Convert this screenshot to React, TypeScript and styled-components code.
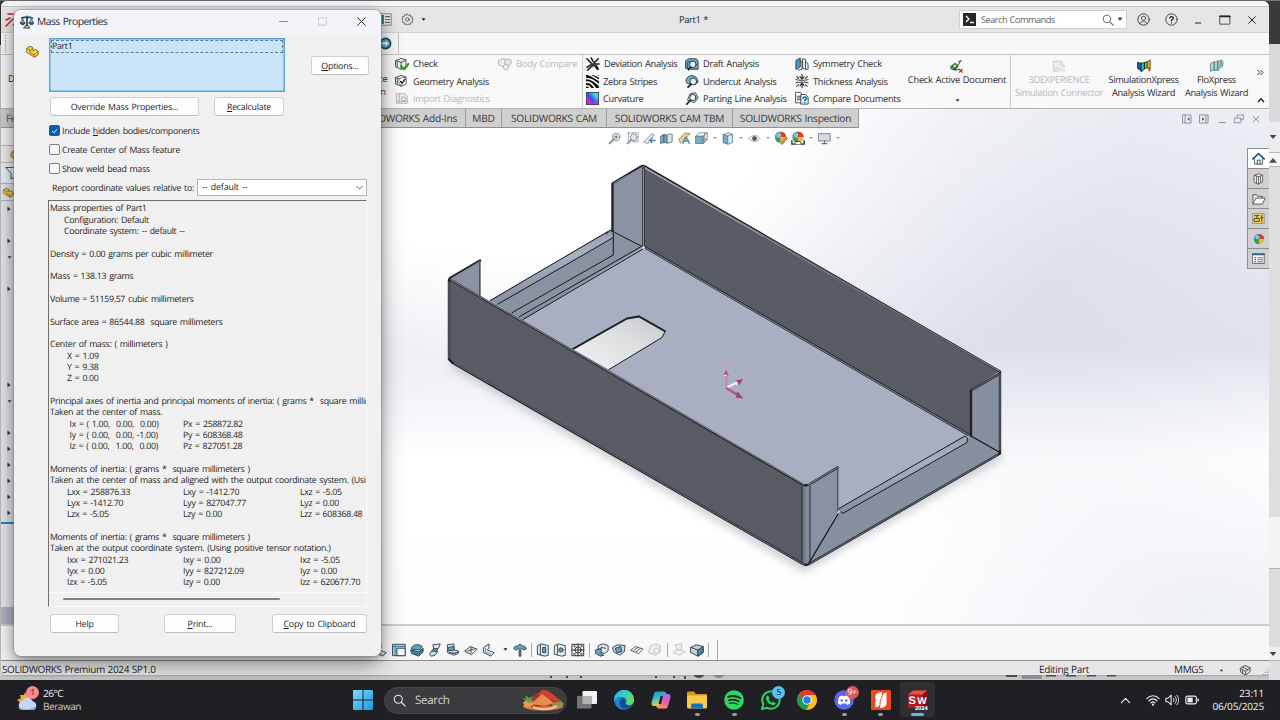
import React from 'react';
import styled, { createGlobalStyle } from 'styled-components';

const GlobalStyle = createGlobalStyle`
  * { box-sizing: border-box; }
  body {
    margin: 0;
    overflow: hidden;
    background: #1f1f23;
    color: #262626;
    font-family: "Open Sans", "Noto Sans", sans-serif;
    text-rendering: geometricPrecision;
  }
  svg { display: block; flex: none; }
`;

/* ---------- desktop ---------- */

const Desktop = styled.div`
  position: relative;
  width: 1280px;
  height: 720px;
  display: grid;
  grid-template-rows: 680px 40px;
  overflow: hidden;
`;

const Screen = styled.div`
  display: grid;
  grid-template-columns: 1269px 11px;
  background: linear-gradient(#3a3a3c 44px, #d8d8d8 44px, #d8d8d8 674px, #c3c6c4 674px);
  border-top: 1px solid #77777a;
  min-height: 0;
`;

const AppColumn = styled.div`
  display: flex;
  flex-direction: column;
  min-width: 0;
`;

const AppWindow = styled.div`
  display: grid;
  grid-template-columns: minmax(0, 1fr);
  grid-template-rows: 5px 27px 21px 55px 517px 35px 14px;
  height: 674px;
  margin-left: 1px;
  background: #f7f7f7;
  border-radius: 6px 6px 2px 6px;
  overflow: hidden;
  box-shadow: 0 0 2px rgba(0, 0, 0, 0.5);
`;

const Behind = styled.div`
  flex: 1;
  overflow: hidden;
`;

const BackStrip = styled.div`
  display: flex;
  flex-direction: column;
`;

const StripPart = styled.div<{ $h: number; $bg: string; $line?: boolean }>`
  height: ${(p) => p.$h}px;
  background: ${(p) => p.$bg};
  display: flex;
  align-items: center;
  justify-content: center;
  padding-right: 3px;
  border-bottom: ${(p) => (p.$line ? '1px solid #b5b5b5' : 'none')};
`;

/* ---------- title bar ---------- */

const TopEdge = styled.div`
  background: #f6f6f6;
`;

const TitleBar = styled.div`
  display: flex;
  align-items: center;
  background: #e5e5e5;
  border-top: 1px solid #c8c8c8;
  border-bottom: 1px solid #d4d4d4;
  padding-left: 4px;
`;

const TitleStart = styled.div`
  width: 387px;
  display: flex;
  justify-content: space-between;
  align-items: center;
`;

const TitleGear = styled.div`
  width: 60px;
  display: flex;
  align-items: center;
  gap: 7px;
  padding-left: 9px;
`;

const DocTitle = styled.div`
  flex: 1;
  text-align: center;
  padding-right: 24px;
  font-size: 9.4px;
  letter-spacing: -0.35px;
  word-spacing: 0.6px;
`;

const SearchBox = styled.div`
  width: 168px;
  height: 19px;
  display: flex;
  align-items: center;
  background: #fff;
  border: 1px solid #cfcfcf;
  padding: 0 3px 0 3px;
  font-size: 9.2px;
  letter-spacing: -0.5px;
  word-spacing: 0.6px;
  color: #666;
`;

const SearchLabel = styled.span`
  flex: 1;
  padding-left: 5px;
`;

const TitleButtons = styled.div`
  width: 142px;
  display: grid;
  grid-template-columns: 32px 24px 30px 24px 30px;
  justify-items: center;
  align-items: center;
`;

/* ---------- menu row and ribbon ---------- */

const MenuRow = styled.div`
  display: flex;
  background: #f7f7f7;
  padding-left: 3px;
`;

const MenuTab = styled.div`
  width: 395px;
  display: flex;
  align-items: center;
  justify-content: space-between;
  border-right: 1px solid #c2c2c2;
  padding-right: 6px;
`;

const Ribbon = styled.div`
  display: grid;
  grid-template-columns: 388px 103px 91px 99px 110px 108px 111px 95px 74px 72px 17px;
  background: #f8f8f8;
  border-top: 1px solid #c4c4c4;
  border-bottom: 1px solid #b4b4b4;
  font-size: 9.3px;
  letter-spacing: -0.32px;
  word-spacing: 0.7px;
  line-height: 13px;
  color: #2c2c2c;
`;

const RibbonEdge = styled.div`
  display: flex;
  justify-content: space-between;
  padding: 17px 0 0 7px;
`;

const RibbonTail = styled.div<{ $end?: boolean }>`
  text-align: ${(p) => (p.$end ? 'center' : 'left')};
  width: 12px;
`;

const RibbonColumn = styled.div<{ $line?: boolean; $pad?: number }>`
  display: grid;
  grid-template-rows: repeat(3, 17.4px);
  padding-left: ${(p) => p.$pad ?? 3}px;
  border-right: ${(p) => (p.$line ? '1px solid #cccccc' : 'none')};
`;

const RibbonItem = styled.div<{ $off?: boolean }>`
  display: flex;
  align-items: center;
  gap: 4px;
  white-space: nowrap;
  color: ${(p) => (p.$off ? '#b9b9b9' : 'inherit')};
  & svg {
    opacity: ${(p) => (p.$off ? 0.4 : 1)};
    filter: ${(p) => (p.$off ? 'grayscale(1)' : 'none')};
  }
`;

const BigItem = styled.div<{ $off?: boolean; $line?: boolean }>`
  display: flex;
  flex-direction: column;
  align-items: center;
  text-align: center;
  padding: 4px 0 0 1px;
  white-space: nowrap;
  color: ${(p) => (p.$off ? '#b9b9b9' : 'inherit')};
  border-right: ${(p) => (p.$line ? '1px solid #cccccc' : 'none')};
  & svg:first-child {
    opacity: ${(p) => (p.$off ? 0.5 : 1)};
  }
`;

const WideLabel = styled.span`
  padding-left: 3px;
  letter-spacing: -0.25px;
`;

const BigArrow = styled.div`
  padding: 12px 0 0 3px;
`;

const RibbonEnd = styled.div`
  display: flex;
  flex-direction: column;
  align-items: center;
  justify-content: space-between;
  padding: 14px 0 5px;
`;

/* ---------- workspace ---------- */

const Workspace = styled.div`
  display: grid;
  grid-template-columns: 13px 1fr;
  min-height: 0;
  border-bottom: 2px solid #cdcdcf;
`;

const TreePanel = styled.div`
  display: grid;
  grid-template-columns: minmax(0, 1fr);
  grid-template-rows: 19px 18px 17px 21px 17px 323px 1fr 16px;
  background: #e3e5e9;
  overflow: hidden;
`;

const TreeCell = styled.div<{ $bg?: string }>`
  background: ${(p) => p.$bg ?? 'transparent'};
  border-bottom: 1px solid #b5b5b8;
  display: flex;
  align-items: center;
  justify-content: flex-end;
  overflow: hidden;
`;

const TreeRows = styled.div`
  display: grid;
  grid-auto-rows: 16px;
  justify-items: center;
  align-items: center;
  align-content: start;
  padding-left: 3px;
  border-bottom: 2px solid #2f81b7;
`;

const LeftTab = styled.div`
  background: #cdcdcd;
  font-size: 10.2px;
  line-height: 18px;
  letter-spacing: -0.6px;
  padding-left: 5px;
  color: #555;
  border-bottom: 1px solid #999;
`;

const Viewport = styled.div`
  position: relative;
  display: flex;
  flex-direction: column;
  overflow: hidden;
  background:
    radial-gradient(ellipse 320px 170px at 1190px 500px, rgba(234, 237, 245, 0.8), rgba(240, 242, 248, 0) 100%),
    radial-gradient(ellipse 300px 290px at 1040px 180px, rgba(207, 210, 226, 0.34), rgba(207, 211, 227, 0) 100%),
    radial-gradient(ellipse 620px 310px at 500px 20px, rgba(255, 255, 255, 1) 40%, rgba(255, 255, 255, 0) 100%),
    linear-gradient(#eceff4 0, #e6e9f0 120px, #e1e4ed 240px, #f3f5f9 300px, #ffffff 350px, #ffffff 420px, #fdfdfe 516px);
`;

const Scene = styled.svg`
  position: absolute;
  inset: 0;
`;

const TabRow = styled.div`
  position: relative;
  height: 19px;
  display: flex;
  justify-content: space-between;
`;

const Tabs = styled.div`
  display: flex;
`;

const Tab = styled.div<{ $w: number; $first?: boolean }>`
  width: ${(p) => p.$w}px;
  background: #cfcfcf;
  border-right: 1px solid #9b9b9b;
  border-bottom: 1px solid #8f8f8f;
  font-size: 10.2px;
  letter-spacing: -0.27px;
  word-spacing: 0.5px;
  line-height: 18px;
  color: #3a3a3a;
  white-space: nowrap;
  text-align: ${(p) => (p.$first ? 'right' : 'center')};
  padding-right: ${(p) => (p.$first ? 8 : 0)}px;
`;

const DocButtons = styled.div`
  display: grid;
  grid-template-columns: repeat(5, 17.4px);
  align-items: center;
  justify-items: center;
  padding: 1px 4px 0 0;
`;

const HeadsUp = styled.div`
  position: relative;
  display: grid;
  grid-template-columns: repeat(5, 17.4px) 17.4px 9px 17.4px 9px 17.4px 9px 17.4px 17.4px 9px 17.4px 9px;
  align-items: center;
  justify-items: center;
  padding-left: 592px;
  height: 20px;
`;

const TaskPane = styled.div`
  position: absolute;
  right: 0;
  top: 39px;
  width: 22px;
  display: grid;
  grid-auto-rows: 20px;
  border: 1px solid #8e8e8e;
  border-right: none;
  border-bottom: none;
`;

const PaneButton = styled.div<{ $active?: boolean }>`
  display: grid;
  place-items: center;
  background: ${(p) => (p.$active ? '#ffffff' : '#d0d0d0')};
  border-bottom: 1px solid #8e8e8e;
`;

/* ---------- bottom rows ---------- */

const SheetBar = styled.div`
  display: flex;
  align-items: center;
  padding: 13px 0 0 371px;
  background: #f7f7f7;
  border-bottom: 1px solid #8c8c8c;
`;

const SheetCell = styled.div<{ $w: number; $off?: boolean }>`
  width: ${(p) => p.$w}px;
  display: grid;
  place-items: center;
  opacity: ${(p) => (p.$off ? 0.35 : 1)};
  filter: ${(p) => (p.$off ? 'grayscale(1)' : 'none')};
`;

const SheetLine = styled.div<{ $h: number }>`
  width: 1px;
  height: ${(p) => p.$h}px;
  background: #a9a9a9;
`;

const StatusBar = styled.div`
  display: grid;
  grid-template-columns: 1037px 135px 45px 16px 1fr;
  background: #e6e6e6;
  font-size: 10px;
  letter-spacing: -0.36px;
  word-spacing: 0.5px;
  line-height: 15px;
  padding: 1px 0 0 1px;
  white-space: nowrap;
  align-items: center;
`;

/* ---------- dialog ---------- */

const Dialog = styled.div`
  position: absolute;
  left: 14px;
  top: 10px;
  width: 367px;
  height: 646px;
  display: flex;
  flex-direction: column;
  background: #f0f0f0;
  border-radius: 7px;
  box-shadow: 0 0 0 1px rgba(120, 120, 120, 0.35), 0 8px 22px rgba(0, 0, 0, 0.42), 0 2px 8px rgba(0, 0, 0, 0.2);
  overflow: hidden;
  font-size: 8.8px;
  letter-spacing: -0.31px;
  word-spacing: 1px;
  color: #1d1d1d;
`;

const DialogTitle = styled.div`
  height: 24px;
  flex: none;
  display: flex;
  align-items: center;
  background: #f2f4fa;
  padding: 0 0 1px 6px;
  font-size: 10.3px;
  letter-spacing: -0.55px;
`;

const DialogName = styled.div`
  flex: 1;
  padding-left: 3px;
`;

const DialogButtons = styled.div`
  display: grid;
  grid-template-columns: repeat(3, 39px);
  justify-items: center;
  align-items: center;
`;

const SelectArea = styled.div`
  display: grid;
  grid-template-columns: 35px 236px 1fr;
  height: 54px;
  margin-top: 4px;
  flex: none;
`;

const PartMark = styled.div`
  padding: 7px 0 0 12px;
`;

const ListBox = styled.div`
  background: #cce4f7;
  border: 1px solid #56a5dc;
  box-shadow: inset 0 0 0 0.5px #56a5dc;
  padding: 1px;
`;

const ListItem = styled.div`
  border: 1px dashed #5d7e96;
  height: 13px;
  line-height: 10px;
`;

const PushButton = styled.div<{ $w: number }>`
  width: ${(p) => p.$w}px;
  height: 19px;
  background: #fdfdfd;
  border: 1px solid #d0d0d0;
  border-bottom-color: #bdbdbd;
  border-radius: 3px;
  text-align: center;
  line-height: 18px;
  letter-spacing: -0.21px;
  white-space: nowrap;
`;

const OptionsSlot = styled.div`
  padding: 18px 0 0 26px;
`;

const ButtonRow = styled.div`
  display: flex;
  gap: 15px;
  margin: 5px 14px 0 36px;
`;

const FooterRow = styled.div`
  display: grid;
  grid-template-columns: 114px 108px 1fr;
  margin: 7px 14px 0 36px;
`;

const CheckLines = styled.div`
  display: grid;
  grid-auto-rows: 19px;
  margin: 5px 0 0 35px;
  align-items: center;
`;

const CheckLine = styled.div`
  display: flex;
  align-items: center;
  gap: 2px;
`;

const CheckBox = styled.div<{ $on?: boolean }>`
  width: 11px;
  height: 11px;
  border-radius: 2px;
  border: 1px solid ${(p) => (p.$on ? '#0a5fb4' : '#7d7d7d')};
  background: ${(p) => (p.$on ? '#0a5fb4' : '#f9f9f9')};
  display: grid;
  place-items: center;
`;

const CoordinateRow = styled.div`
  display: flex;
  align-items: center;
  justify-content: space-between;
  height: 17px;
  margin: 1px 14px 0 38px;
  letter-spacing: -0.28px;
  white-space: nowrap;
`;

const SelectBox = styled.div`
  width: 170px;
  height: 17px;
  border: 1px solid #b5b5b5;
  background: #fff;
  display: flex;
  align-items: center;
  justify-content: space-between;
  padding: 0 3px 1px 4px;
  letter-spacing: -0.1px;
`;

const Report = styled.div`
  height: 407px;
  margin: 4px 14px 0 34px;
  border-left: 1px solid #6f6f6f;
  border-top: 1.5px solid #6f6f6f;
  border-right: 1px solid #fbfbfb;
  border-bottom: 1px solid #fbfbfb;
  display: grid;
  grid-template-columns: minmax(0, 1fr);
  grid-template-rows: 391px 14px;
  overflow: hidden;
`;

const ReportText = styled.div`
  padding: 2.4px 0 0 1px;
  display: grid;
  grid-auto-rows: 11.34px;
  align-content: start;
  line-height: 11.34px;
  white-space: pre;
  overflow: hidden;
`;

const ReportLine = styled.div<{ $indent: number }>`
  padding-left: ${(p) => p.$indent}px;
  height: 11.34px;
`;

const ReportColumns = styled.div<{ $indent: number }>`
  display: grid;
  grid-template-columns: ${(p) => 133 - p.$indent}px 117px 1fr;
  padding-left: ${(p) => p.$indent}px;
`;

const ReportScroll = styled.div`
  border-top: 1px solid #fafafa;
  padding: 5px 0 0 14px;
`;

const ScrollThumb = styled.div`
  width: 217px;
  height: 2px;
  border-radius: 1px;
  background: #828282;
`;

/* ---------- taskbar ---------- */

const Taskbar = styled.div`
  display: grid;
  grid-template-columns: 353px 31px 183px 2px 367px 1fr;
  align-items: center;
  background: #202024;
  color: #f2f2f2;
`;

const Weather = styled.div`
  display: flex;
  align-items: center;
  gap: 3px;
  padding-left: 16px;
  font-size: 10px;
  letter-spacing: -0.45px;
  line-height: 13.5px;
`;

const Muted = styled.div`
  color: #c6c6c8;
`;

const SearchPill = styled.div`
  height: 27px;
  border-radius: 14px;
  background: #3c3c40;
  border: 1px solid #47474b;
  display: grid;
  grid-template-columns: 22px 106px 1fr;
  align-items: center;
  padding-left: 8px;
  font-size: 11.6px;
  letter-spacing: -0.35px;
  color: #d2d2d4;
`;

const AppIcons = styled.div`
  grid-column: 5;
  display: grid;
  grid-template-columns: repeat(10, 36.7px);
  height: 40px;
`;

const TaskSlot = styled.div<{ $active?: boolean }>`
  position: relative;
  display: grid;
  grid-template-rows: 24px 3px;
  justify-items: center;
  align-content: end;
  align-items: center;
  gap: 1px;
  margin: 2px 1px 3px;
  padding-bottom: 1px;
  border-radius: 4px;
  background: ${(p) => (p.$active ? '#2f2f34' : 'transparent')};
`;

const Running = styled.div<{ $kind: 'none' | 'dot' | 'active' }>`
  width: ${(p) => (p.$kind === 'active' ? 13 : 5)}px;
  height: ${(p) => (p.$kind === 'none' ? 0 : 2.5)}px;
  border-radius: 2px;
  background: ${(p) => (p.$kind === 'active' ? '#5cb8e8' : '#9b9b9e')};
`;

const Badge = styled.div<{ $bg: string; $fg: string; $top?: number; $right?: number }>`
  position: absolute;
  top: ${(p) => p.$top ?? 4}px;
  right: ${(p) => p.$right ?? 3}px;
  min-width: 13px;
  height: 13px;
  border-radius: 7px;
  background: ${(p) => p.$bg};
  color: ${(p) => p.$fg};
  font-size: 8.5px;
  line-height: 13px;
  letter-spacing: -0.4px;
  text-align: center;
`;

const Tray = styled.div`
  display: grid;
  grid-template-columns: 36px 19px 20px 19px 1fr;
  justify-items: center;
  align-items: center;
  padding: 0 16px 0 171px;
`;

const Clock = styled.div`
  justify-self: end;
  text-align: right;
  font-size: 10px;
  line-height: 13px;
  letter-spacing: -0.15px;
`;

const WeatherArt = styled.div`
  position: relative;
`;

/* ---------- drawings ---------- */

type IconProps = { s?: number; children: React.ReactNode; vb?: string; w?: number };
const Icon = ({ s = 14, w, vb = '0 0 16 16', children }: IconProps) => (
  <svg width={w ?? s} height={s} viewBox={vb} fill="none" stroke="#3d4246" strokeWidth="1" strokeLinecap="round" strokeLinejoin="round">
    {children}
  </svg>
);

const Down = ({ c = '#444', s = 5 }: { c?: string; s?: number }) => (
  <svg width={s} height={s} viewBox="0 0 6 6"><path d="M0.5 1.5h5L3 4.5z" fill={c} /></svg>
);
const Up = ({ s = 8 }: { s?: number }) => (
  <svg width={s} height={s} viewBox="0 0 6 6"><path d="M0 5h6L3 1.5z" fill="#4a4a4a" /></svg>
);
const Right = () => (
  <svg width="4" height="6" viewBox="0 0 4 6"><path d="M0.5 0.5v5L3.5 3z" fill="#3b3b3b" /></svg>
);

const cube = <><path d="M1 4 7 1.500 12.500 3.500v8L7 14 1 11.500z" fill="#eceef0" /><path d="M1 4 7 6.200 12.500 3.500M7 6.200V14M2.500 5.500v6" /></>;

const CheckIcon = () => <Icon>{cube}<path d="M7 10.500 10.500 14 15.300 8" stroke="#2f9a1e" strokeWidth="2.600" /></Icon>;
const GeometryIcon = () => <Icon>{cube}<circle cx="8.500" cy="8.500" r="4.400" fill="#fff" stroke="#777" /><path d="M6.500 8.500 8.200 10.500 11 6.500" stroke="#222" strokeWidth="1.700" /></Icon>;
const ImportIcon = () => <Icon><path d="M2 3h9l3 3v8H2z" fill="#ddd" /><path d="M5 3v8M2 12h12M8 7h4v4H8z" /></Icon>;
const CompareBodyIcon = () => <Icon><path d="M1 4l4-2 5 1v6l-4 2-5-2z" fill="#ddd" /><path d="M8 4l3-2 4 2v4l-3 2-4-2z" fill="#ccc" /><circle cx="9" cy="11.500" r="3" fill="#eee" /></Icon>;
const DeviationIcon = () => <Icon><path d="M1 2l5 5M14 2 9 7M6 1l2 4M1 12c5-5 9-4 14-4M2 15l4-4M10 10l3 4M14 14l-2-4" stroke="#1c1c1c" strokeWidth="1.700" /><path d="M5 9l3-2 3 1-3 3z" fill="#333" /></Icon>;
const ZebraIcon = () => (
  <svg width="13" height="13" viewBox="0 0 16 16"><rect width="16" height="16" fill="#111" />
    <g stroke="#fff" strokeWidth="1.900" fill="none"><path d="M-1 4.500c6-1 11 2 18 9" /><path d="M2-1c6 2 9 5 15 8" /><path d="M-1 9c6-1 8 1 13 8" /><path d="M9-1c3 1 5 2 8 4" /><path d="M-1 13.500c3-1 5 0 7 3" /></g>
  </svg>
);
const CurvatureIcon = () => (
  <svg width="13" height="13" viewBox="0 0 16 16">
    <defs><linearGradient id="rainbow" x1="0" y1="0.900" x2="1" y2="0.100"><stop offset="0" stopColor="#e2243a" /><stop offset="0.220" stopColor="#d42bd8" /><stop offset="0.400" stopColor="#5a35f0" /><stop offset="0.580" stopColor="#2b8cf0" /><stop offset="0.760" stopColor="#27e0dc" /><stop offset="1" stopColor="#5fe08a" /></linearGradient></defs>
    <rect x="0.500" y="0.500" width="15" height="15" fill="url(#rainbow)" stroke="#334" /><path d="M15 15V9c-3 1-6 3-7 6z" fill="#d92bc0" opacity="0.600" />
  </svg>
);
const DraftIcon = () => <Icon><path d="M1 4l3-2h9l2 3v9H8L1 13z" fill="#6fa9c6" stroke="#1f3a4a" /><path d="M3 13V6l3-1" stroke="#1f3a4a" /><circle cx="9" cy="8.500" r="3.800" fill="#e8f3f8" stroke="#222" /><path d="M6.500 11.500 4 14.500" strokeWidth="2" stroke="#222" /></Icon>;
const UndercutIcon = () => <Icon><path d="M1 8c0-6 8-8 12-4l2 5-3 3-9-1z" fill="#79b0cb" stroke="#1f3a4a" /><circle cx="9.500" cy="8.500" r="3.800" fill="#e8f3f8" stroke="#222" /><path d="M7 11.500 3.500 15" strokeWidth="2" stroke="#222" /></Icon>;
const PartingIcon = () => <Icon><path d="M3 10 6 3l6-1 3 6-4 5z" fill="#cfe0ea" stroke="#29424f" /><circle cx="9" cy="7.500" r="3.600" fill="#eef5f9" stroke="#222" /><path d="M6.500 10.500 2 15" strokeWidth="2" stroke="#333" /></Icon>;
const SymmetryIcon = () => <Icon><path d="M1 14V4l5-3v10z" fill="#4f97bd" stroke="#1e3b4b" /><path d="M6 5h2v9l-4 1" /><path d="M9 2l3 1v11l-3-1zM12 5c4 1 3 7 3 9h-3" fill="#dde9f0" /></Icon>;
const ThicknessIcon = () => <Icon><path d="M1 6.500c4 1 10 1 14 0M1 10c4-1 10-1 14 0" stroke="#222" /><path d="M8 0v5M5.500 3 8 6l2.500-3M8 16v-5M5.500 13.500 8 10.500l2.500 3M2 3l2 2M14 3l-2 2M2 14l2-2M14 14l-2-2" stroke="#222" strokeWidth="1.200" /></Icon>;
const CompareDocIcon = () => <Icon><path d="M1 1.500h5l2 2v10H1z" fill="#fafafa" /><path d="M2.500 6h4M2.500 8h4M2.500 10h4" /><path d="M7 4h5l3 3v8H7z" fill="#e4f2f8" /><path d="M9.300 8.500c0-2.200 3.800-2.200 3.800 0 0 1.300-1.900 1.300-1.900 2.700M11.200 13.300v.2" stroke="#0d6ea3" strokeWidth="1.700" /></Icon>;
const ActiveDocIcon = () => <Icon s={14}><path d="M2 9l5-4 3 3-3 4z" fill="#cde8c4" stroke="#2c8424" strokeWidth="1.500" /><path d="M4 8l3 3 6-8M14 2l-3 1M2 11c3 2 6 2 9 1" stroke="#1d1d1d" /><path d="M12 12l3 3M15 12l-3 3" stroke="#d42020" strokeWidth="1.500" /></Icon>;
const ThreeDxIcon = () => <Icon s={14}><path d="M2 3l5-1 5 1v3l3 2-2 2 1 4H2z" fill="#c9c9c9" stroke="#a5a5a5" /><path d="M4 5h4v3H4zM9 9a3 3 0 1 1-2 4" stroke="#eee" strokeWidth="1.500" /></Icon>;
const SimIcon = () => <Icon s={14}><path d="M1 4l5 1v9l-5-3z" fill="#2456b8" stroke="#123" /><path d="M5 5l4-1v7l-4 3z" fill="#26b7c9" stroke="#133" /><path d="M9 4l3-1v7l-3 1z" fill="#6cc935" stroke="#133" /><path d="M12 3l3-2v11l-3-2z" fill="#f0c21a" stroke="#531" /><path d="M13 9h2v5h-2z" fill="#e04220" stroke="none" /></Icon>;
const FloIcon = () => <Icon s={14}><path d="M1 5l4-2v9l-4 2zM5 4l4-2v9l-4 2z" fill="#b5d8d0" stroke="#5e8480" /><path d="M9 3l4-2v8l-4 3z" fill="#a5b8a4" stroke="#6a7a6a" /><path d="M2 13h8M13 2c3 1 2 3 1 6" stroke="#4ab3c9" strokeWidth="1.500" /></Icon>;

const GearIcon = () => <Icon s={13}><circle cx="8" cy="8" r="2.200" stroke="#444" /><path d="M8 1.200l1.300 1.900 2.200-.8.5 2.300 2.300.5-.8 2.200L15 8l-1.500 1.200.8 2.200-2.300.5-.5 2.300-2.200-.8L8 15l-1.300-1.600-2.200.8-.5-2.300-2.300-.5.8-2.200L1 8l1.500-1.200-.8-2.200 2.300-.5.5-2.300 2.200.8z" stroke="#555" /></Icon>;
const ListIcon = () => <Icon s={13}><rect x="1" y="1" width="14" height="14" fill="#e9edf0" stroke="#6e7478" /><path d="M3 2.500h3v11H3z" fill="#336b82" stroke="none" /><path d="M8 4.500h5M8 8h5M8 11.500h5" stroke="#5e666b" strokeWidth="1.400" /></Icon>;
const CompassIcon = () => <Icon s={13}><circle cx="8" cy="8" r="6.300" fill="#5fa3c0" stroke="#154a68" strokeWidth="2" /><path d="M4 7h4V4.500L12 8l-4 3.500V9H4z" fill="#fff" stroke="none" /></Icon>;

const Magnifier = ({ c = '#666', s = 12 }: { c?: string; s?: number }) => <Icon s={s}><circle cx="6.500" cy="6.500" r="5" stroke={c} strokeWidth="1.300" /><path d="M10.200 10.200 15 15" stroke={c} strokeWidth="1.500" /></Icon>;

const ZoomFit = () => <Icon s={13}><circle cx="10" cy="6" r="4.500" fill="#e6edf1" stroke="#6a747a" /><path d="M7 9 2 14" stroke="#8196a3" strokeWidth="2.600" /><path d="M8 6h4M10 4v4" stroke="#59636a" /></Icon>;
const ZoomArea = () => <Icon s={13}><path d="M3 1h12v11H3z" strokeDasharray="2 2" stroke="#777" /><circle cx="9.500" cy="6.500" r="4.300" fill="#dbe7ee" stroke="#76848c" /><path d="M6.500 9.500 2 14" stroke="#8ba0ad" strokeWidth="2.600" /></Icon>;
const PrevView = () => <Icon s={13}><path d="M1 12 11 2l2.500 1.500L6 14z" fill="#e5e8ea" stroke="#81888d" /><path d="M15 10.500H8m3-2.500-3 2.500 3 2.500" stroke="#4d8dad" strokeWidth="1.800" /></Icon>;
const SectionView = () => <Icon s={13}><path d="M1 5l4-2v10l-4 1zM5 3l4 1v9l-4 0z" fill="#74aecb" stroke="#4c6472" /><path d="M9 4l3-2 3 1v9l-6 2z" fill="#dbe5ea" stroke="#59676f" /></Icon>;
const DynamicView = () => <Icon s={13}><path d="M1 9 9 1l6 1-8 7z" fill="#f2cd82" stroke="#a08145" /><path d="M1 9l2 5 5-5" fill="#f6dca4" stroke="#a08145" /><path d="M6 14 10 6l4 8M8 11h5" stroke="#4c8fb5" strokeWidth="1.700" /></Icon>;
const OrientIcon = () => <Icon s={13}><path d="M1 5h9v9H1z" fill="#70aecb" stroke="#5b7482" /><path d="M1 5l4-4h10v9l-5 4M10 5l5-4M10 5v9M10 9h5M12 1v12" fill="none" stroke="#6d7b83" /></Icon>;
const StyleIcon = () => <Icon s={13}><path d="M2 3 8 1l5 2v10l-5 2-6-2z" fill="#d7e9f2" stroke="#5c7c8d" /><path d="M2 3l5 2v10l-5-2z" fill="#73b0ce" stroke="#5c7c8d" /><path d="M7 5l6-2" stroke="#5c7c8d" /></Icon>;
const EyeIcon = () => <Icon s={13}><path d="M1 8c4-5 10-5 14 0-4 5-10 5-14 0z" fill="#f1f1f1" stroke="#9a9fa3" /><circle cx="8" cy="8" r="2.800" fill="#4b5156" stroke="none" /></Icon>;
const Ball = ({ cx = 8, cy = 8, r = 6 }: { cx?: number; cy?: number; r?: number }) => (
  <g stroke="none">
    <path d={`M${cx} ${cy}V${cy - r}A${r} ${r} 0 0 0 ${cx - r} ${cy}z`} fill="#3f8fc0" />
    <path d={`M${cx} ${cy}V${cy - r}A${r} ${r} 0 0 1 ${cx + r} ${cy}z`} fill="#d8402f" />
    <path d={`M${cx} ${cy}H${cx + r}A${r} ${r} 0 0 1 ${cx} ${cy + r}z`} fill="#e9b93c" />
    <path d={`M${cx} ${cy}H${cx - r}A${r} ${r} 0 0 0 ${cx} ${cy + r}z`} fill="#3c9a4a" />
    <circle cx={cx - r / 3} cy={cy - r / 3} r={r / 2.6} fill="#fff" opacity="0.450" />
  </g>
);
const AppearIcon = () => <Icon s={14}><Ball cx={7.5} cy={7} r={6.5} /><path d="M8 14 14 7l1.500 1.500L9.500 15z" fill="#e8b66b" stroke="#7b5c33" /></Icon>;
const SceneIcon = () => <Icon s={14}><Ball cx={8} cy={7} r={6.5} /><path d="M1 11v4h14v-4" stroke="#333" strokeWidth="1.600" /><path d="M4 15l2-3h4l2 3" fill="#fff" stroke="#333" /></Icon>;
const MonitorIcon = () => <Icon s={13}><rect x="1" y="2" width="14" height="9" fill="#d0dde4" stroke="#6b7074" /><path d="M8 11v3M5 14.300h6" stroke="#6b7074" strokeWidth="1.400" /></Icon>;

const docStroke = '#8b8f96';
const HomeIcon = () => <Icon s={13}><path d="M3 8v7h10V8" fill="#eef4f7" stroke="#3b5060" /><path d="M1 8.500 8 2l7 6.500" stroke="#1c5a7e" strokeWidth="2" /><path d="M6.500 15v-5h3.500v5" stroke="#333" /></Icon>;
const LibraryIcon = () => <Icon s={13}><path d="M3 4 8 2l5 2v8l-5 3-5-2z" fill="#eee" stroke="#555" /><path d="M3 4l5 2 5-2M8 6v9M5.500 5v9M10.500 5v8.500" stroke="#555" /></Icon>;
const FolderIcon = () => <Icon s={14}><path d="M1 13V3h4l1.500 2H12v2" fill="#e4e4e4" stroke="#555" /><path d="M1 13.500 4.500 7H15l-3 6.500z" fill="#f4f4f4" stroke="#555" /></Icon>;
const PaletteIcon = () => <Icon s={13}><path d="M1 2h14v12H1z" fill="#f1d769" stroke="#85857c" /><path d="M3 4.500h6M6 4.500v3M3 8h6v3.500H3zM12 4v8M10.500 7h3" stroke="#4a4630" strokeWidth="1.200" /></Icon>;
const PropsIcon = () => <Icon s={13}><rect x="1" y="2" width="14" height="12" fill="#fdfdfd" stroke="#44525b" /><path d="M1 3h14" stroke="#2b6b8d" strokeWidth="2" /><path d="M3.500 7h1M3.500 9.500h1M3.500 12h1" stroke="#2b6b8d" strokeWidth="1.500" /><path d="M7 7h6M7 9.500h6M7 12h6" stroke="#555" /></Icon>;

const blue = '#5fa5c4';
const dk = '#2a3942';
const SheetIcons: React.ReactNode[] = [
  <><path d="M1 1.500h14v13H1z" fill="#a9d2e5" stroke={dk} /><path d="M6 6h9v8.500H6z" fill="#f4f7f8" stroke={dk} /><path d="M3.500 2v12M1 4h14" stroke="#3c7a99" /></>,
  <><path d="M2 5c2-4 9-4 12-1l-3 4-9-1z" fill={blue} stroke={dk} /><path d="M1 8l9 2 5-4v4l-5 5-8-3z" fill="#3d7f9f" stroke={dk} /></>,
  <><path d="M6 2l8-1-2 5-5 1z" fill="#dbe8ee" stroke={dk} /><path d="M7 6l4 1-1 3-5-1z" fill={blue} stroke={dk} /><path d="M2 13l2-4 7 1-3 4-4 1z" fill="#c6dde8" stroke={dk} /></>,
  <><path d="M2 2l7-1v7l5 1v3l-5 2-7-3z" fill="#cfe2ea" stroke={dk} /><path d="M3 5l6-1v4l-6 1zM4 11l6 1 4-2" fill={blue} stroke={dk} /></>,
  <><path d="M1 9l6-5 8 3-6 6z" fill="#e4ecef" stroke={dk} /><path d="M4 9l8-2M8 5v7" stroke={dk} strokeDasharray="1.500 1" /></>,
  <><path d="M2 5l6-4v5l-2 2 8 3-4 4-8-4z" fill="#e6eaec" stroke={dk} /><path d="M4 6v4l6 3" stroke="#4c8aa8" /></>,
  <><path d="M1 6c1-3 3-3 4-2 1-3 5-3 6 0 2-1 4 0 4 3l-3 1-2-2-1 1v8H7V7L6 6 4 8z" fill={blue} stroke={dk} /></>,
  <><path d="M2 3l4-2 8 2v11l-4 1-8-2z" fill="#dce8ed" stroke={dk} /><path d="M5 1.500v12M8 5h3v6H8z" fill={blue} stroke={dk} /></>,
  <><path d="M2 3l4-2 8 2v11l-4 1-8-2z" fill="#eef1f2" stroke={dk} /><circle cx="9" cy="8" r="2.500" fill={blue} stroke={dk} /><path d="M5 2v11" stroke={dk} /></>,
  <><path d="M1.500 1.500h13v13h-13z" fill="#e8eaeb" stroke="#222" /><circle cx="8" cy="8" r="3.500" stroke="#222" /><path d="M1 8h14M8 1v14" stroke="#222" /><path d="M3.500 3.500h1M11.500 3.500h1M3.500 12.500h1M11.500 12.500h1" stroke="#222" strokeWidth="1.500" /></>,
  <><path d="M4 3l5-2 6 2v6l-4 3-7-2z" fill="#dfe9ee" stroke={dk} /><path d="M1 8l6-2v6l3 2-4 1-5-3z" fill={blue} stroke={dk} /><path d="M7 5l5 1" stroke={dk} /></>,
  <><path d="M1 5l5-3 9 1-1 7-5 4-7-4z" fill="#c5dce6" stroke={dk} /><path d="M4 6l6-2 1 6-5 1z" fill={blue} stroke={dk} /></>,
  <><path d="M1 8l5-4 9 3-5 5z" fill="#f0f0f0" stroke="#555" /><path d="M4 9l5-4M7 10l5-4" stroke="#555" /></>,
  <><path d="M3 3l6-2 5 2v7l-5 4-8-3z" fill="#dcdcdc" stroke="#555" /><circle cx="10" cy="9" r="3" fill="#eee" stroke="#555" /></>,
  <><path d="M4 2l7-1v7l4 2-6 4-8-3 4-3z" fill="#dcdcdc" stroke="#555" /><path d="M5 8l6 0" stroke="#555" /></>,
  <><path d="M1 5l6-3 8 2v7l-6 4-8-4z" fill="#c8ced2" stroke={dk} /><path d="M9 8l6-4v7l-6 4z" fill="#3f88ab" stroke={dk} /><path d="M1 5l8 3" stroke={dk} /></>,
];
const SheetIcon = ({ n }: { n: number }) => <Icon s={14}>{SheetIcons[n]}</Icon>;

const YellowPart = ({ s = 13 }: { s?: number }) => (
  <Icon s={s}><path d="M1 4 5 1.500 8.500 3.500V7l3-1.500L15 7.500v4.500L10.500 15 1.500 9.500z" fill="#f7cf4a" stroke="#6d5214" /><path d="M1.500 4.500 5 6.500v2.500l5 3 4.500-3.500M5 6.500 8 4.500M10 12v2.500" stroke="#8a6a1c" /></Icon>
);
const ScalesIcon = () => (
  <Icon s={14}><path d="M8 1.500V13M2 3.500C5 2 11 2 14 3.500" stroke="#1f4b68" strokeWidth="2" /><path d="M0.500 9 3 4.500 5.500 9zM10.500 9 13 4.500 15.500 9z" fill="#e3b749" stroke="#35546a" /><path d="M0.500 9h5c0 3-5 3-5 0zM10.500 9h5c0 3-5 3-5 0z" fill="#2e6f96" stroke="#1f4b68" /><path d="M4.500 15h7l-2-3h-3z" fill="#d4a538" stroke="#1f4b68" /></Icon>
);

/* Sheet-metal tray drawn in screen coordinates of the viewport */
const Model = () => (
  <Scene width="1255" height="515" viewBox="14 109 1255 515" fill="none">
    <defs>
      <linearGradient id="roll" x1="0" y1="0" x2="0.350" y2="1"><stop offset="0" stopColor="#7d8698" /><stop offset="0.500" stopColor="#aab0c4" /><stop offset="1" stopColor="#7d8494" /></linearGradient>
      <linearGradient id="corner"><stop offset="0" stopColor="#646973" /><stop offset="0.600" stopColor="#878e9c" /><stop offset="1" stopColor="#7e8593" /></linearGradient>
      <linearGradient id="hole" x1="0" y1="1" x2="1" y2="0"><stop offset="0" stopColor="#f1f2f3" /><stop offset="0.600" stopColor="#dcdddf" /><stop offset="1" stopColor="#c3c6cd" /></linearGradient>
      <filter id="soft" x="-10%" y="-10%" width="120%" height="130%"><feGaussianBlur stdDeviation="5" /></filter>
    </defs>
    <path d="M452 362 804 566 1000 454" stroke="#8a8d93" strokeOpacity="0.500" strokeWidth="9" filter="url(#soft)" />
    <g strokeLinejoin="round" strokeLinecap="round">
      <path d="M608 231 614 231 645 248 524 321 490 301z" fill="#8992a1" />
      <path d="M608 231.500 614 237 498 304 490 300z" fill="url(#roll)" />
      <path d="M643 167 612 183V231L643 248z" fill="#8b93a2" />
      <path d="M450 279 480 261V297z" fill="#8b93a2" />
      <path d="M643 247 971 437 839 513V467L806 485 522 320z" fill="#a9afc2" />
      <path d="M644 168 999 372 971 390V438L644 248z" fill="#595c65" />
      <path d="M1000 372 971 390V438L1000 454z" fill="#8790a0" />
      <path d="M838 513 969 437 971 436 1000 453 809 563z" fill="#8790a0" />
      <path d="M839 508.500 965 436 968 442.500 843 513.500z" fill="url(#roll)" />
      <path d="M572 349 626.500 318.500 639 316 665.500 331 662 337.500 609 369.500z" fill="url(#hole)" />
      <path d="M449 280 803 485V564L448 360z" fill="#595c65" />
      <path d="M802 484H810V562L806 564.500 802 563z" fill="url(#corner)" />
      <path d="M810 484 838 467.500V512L810 562z" fill="#8992a2" />
    </g>
    <g stroke="#17181b" strokeWidth="1" strokeLinejoin="round" strokeLinecap="round">
      <path d="M608 231.500 490 300.700M613 237.700 497.700 304.300M613.300 233V255L512 312.700M641 246.700 519.300 316.700M643 249 523 319.500M606.500 234 610 230 643 247" />
      <path d="M572 349 626.500 318.500 639 316 665.500 331 662 337.500 609 369.500" />
      <path d="M838 467V511M480 261V297M839 508.500 965 436 967.500 438 967 442.500 842.500 513.500 839 509.500" />
      <path d="M838 514 809 563M971 436 1000 452.500" strokeWidth="1.400" />
    </g>
    <g stroke="#202226" strokeWidth="2.400" strokeLinejoin="round" strokeLinecap="round">
      <path d="M612.500 231V183.500L641 166.500Q643 165.500 645 166.500L1000 371.500V452" />
      <path d="M643.500 167V246.500M645 247.500 970 435.500" />
      <path d="M480 260.500 450 278Q449 279 449 281V359L452 362.500 803 564Q806 565.500 809 564L1000 453.500" />
      <path d="M450 279.500 803 484.500Q806 486 809 484.500L837.500 467.500M971 436V390.500L999 374" />
      <path d="M574 348.500 627 318.500 639 316.500 664.500 331" strokeWidth="2" />
    </g>
    <g stroke="#8a909c" strokeWidth="1" strokeLinecap="round">
      <path d="M613.500 183.300 643.500 166.500 1000 371.500M451 278.800 479.500 261.700M450.500 279.500 804 484.500M808 485 837.500 467.500M643.500 169V246M645.500 248 970 435.700" />
      <path d="M449 282V358M454 363 804 564.500M810 563.500 998 454.500M972 390 999 374M1000 374V450" stroke="#6d727d" />
    </g>
    <path d="M802 486V563M810 486V562" stroke="#26282d" strokeWidth="0.900" />
    <circle cx="643.500" cy="247.500" r="1.300" fill="#fff" /><circle cx="968.500" cy="437" r="1.100" fill="#b9bdc8" /><circle cx="839.500" cy="511" r="1.100" fill="#b9bdc8" />
    <g strokeLinecap="round">
      <path d="M726.500 387.500V376" stroke="#cf86ab" strokeWidth="2.200" /><path d="M723.700 376 726 369.500 728.700 376z" fill="#b0447c" />
      <path d="M728 387 737 382.500" stroke="#f7eaf2" strokeWidth="2.400" /><path d="M736 380.500 743 379 739.500 385z" fill="#a73e74" />
      <path d="M727 388.500 737 394.500" stroke="#b65587" strokeWidth="2.600" /><path d="M737.500 391.500 743.500 398.500 735.500 397.500z" fill="#a73e74" />
      <path d="M725.500 361.500 730 365M730 361 725.500 365M748 374.500 750 377.500" stroke="#d59ac0" strokeWidth="1.200" opacity="0.700" />
      <path d="M724.500 375.500 727 375M736.500 384.500V382.500" stroke="#fff" />
    </g>
  </Scene>
);

/* ---------- taskbar drawings ---------- */

const Art = ({ children, s = 20 }: { children: React.ReactNode; s?: number }) => <svg width={s} height={s} viewBox="0 0 20 20">{children}</svg>;

const WeatherIcon = () => (
  <svg width="24" height="26" viewBox="0 0 24 26"><path d="M9 5l2 3 3-1v5l2 4H5l-4-3 4-2-1-3 4 0z" fill="#f5a93a" /><path d="M6 23a5 5 0 0 1 .5-9.500 6 6 0 0 1 10.500 1 4.400 4.400 0 0 1 0 8.500z" fill="#c4d6f5" /><path d="M2 20c5 3 13 3 18-1a4 4 0 0 1-3.500 4H6a5 5 0 0 1-4-3z" fill="#86a9e6" /></svg>
);
const WinLogo = () => (
  <svg width="20" height="20" viewBox="0 0 20 20"><defs><linearGradient id="win" x1="0" y1="0" x2="1" y2="1"><stop offset="0" stopColor="#7fdcfb" /><stop offset="1" stopColor="#1b97e4" /></linearGradient></defs><path d="M0 1q0-1 1-1h8.500v9.500H0zM10.500 0H19q1 0 1 1v8.500h-9.500zM0 10.500h9.500V20H1q-1 0-1-1zM10.500 10.500H20V19q0 1-1 1h-8.500z" fill="url(#win)" /></svg>
);
const FoodIcon = () => (
  <svg width="44" height="22" viewBox="0 0 44 22"><ellipse cx="22" cy="17" rx="20" ry="4.500" fill="#d97c48" /><path d="M5 15 14 6 22 1 27 2 40 12 36 17 10 18z" fill="#a8332c" /><path d="M16 5l6-4.500 6 2 12 9-5 1z" fill="#d0402f" /><path d="M10 15 21 5l12 9-9 3z" fill="#e78b50" /><path d="M2 14c2-3 5-4 8-2l3 4-7 3z" fill="#e39b58" /><path d="M1 9l4 1-1-4 4 3 4-2-2 4 4 1-6 2z" fill="#6c9c48" /><path d="M32 14l8-2 3 3-5 3-7-1z" fill="#7b9c4c" /><path d="M12 18c7 3 16 3 24-1" stroke="#f2c08c" strokeWidth="2" fill="none" /></svg>
);
const TaskViewIcon = () => <Art><rect x="5.500" y="1" width="14.500" height="13" rx="1" fill="#f1f1f1" /><rect x="0" y="6" width="14.500" height="12.500" rx="1" fill="#747476" /><path d="M5.500 6h9v8h-9z" fill="#b1b1b2" /></Art>;
const EdgeIcon = () => (
  <Art><defs><linearGradient id="ea" x1="0" y1="0" x2="1" y2="0.600"><stop offset="0" stopColor="#2aa9e8" /><stop offset="0.550" stopColor="#38cfc0" /><stop offset="1" stopColor="#6bdc62" /></linearGradient></defs>
    <circle cx="10" cy="10" r="10" fill="#1763b8" /><path d="M0 9.500A10 10 0 0 1 20 10c0 3-2 5-5 5-2 0-3.500-1-3.200-2 1.500-2.500.2-6-3.800-6C4 6.800 1 9 0 12z" fill="url(#ea)" /><path d="M19 14.500c-5 2.500-9-.5-7.200-4-.8 1-1 2-.3 3.200 1.300 2 4.500 2.300 7.500.8z" fill="#202024" /><path d="M8 8.500c-4 3-2 9 3.500 9.500 2.500.2 4.800-.5 6-2-4.500 1.500-8.500-2-6.500-6z" fill="#17437c" opacity="0.700" /><path d="M1 12c0-3 3-5.500 7-4.500-4 2-4 8 1 12.500A10 10 0 0 1 1 12z" fill="#1c86d8" /></Art>
);
const CopilotIcon = () => (
  <Art><defs><linearGradient id="ca" x1="0" y1="0" x2="0.300" y2="1"><stop offset="0" stopColor="#2486e8" /><stop offset="0.500" stopColor="#2fc1c5" /><stop offset="1" stopColor="#f0cb3c" /></linearGradient><linearGradient id="cb" x1="0.800" y1="0" x2="0.300" y2="1"><stop offset="0" stopColor="#a769f0" /><stop offset="0.550" stopColor="#ec5fa3" /><stop offset="1" stopColor="#f9a05c" /></linearGradient></defs>
    <path d="M5 1.500h8c1.500 0 2 1 2.500 3H12L9 14.500C8.500 16 7.500 16 6 16H3c-2 0-3-1.500-2.400-4L3 4c.4-1.500 1-2.500 2-2.500z" fill="url(#ca)" /><path d="M15 18.500H8c-1.500 0-2.500-1-3-3h3.500L11 6c.4-1.500 1.500-2 3-2h3c2 0 3 1.500 2.400 4L17 16c-.4 1.500-1 2.500-2 2.500z" fill="url(#cb)" /><path d="M9.500 6h2.500l-2 8H7.500z" fill="#202024" /></Art>
);
const ExplorerIcon = () => <Art><path d="M0 2.500q0-1 1-1h6l2 2.500H19q1 0 1 1V10H0z" fill="#d9971f" /><path d="M0 5.500h20V17q0 1.500-1.500 1.500h-17Q0 18.500 0 17z" fill="#f8ca4c" /><path d="M4 18.500V15q0-1.500 1.500-1.500h9q1.500 0 1.500 1.500v3.500z" fill="#1d79c4" /><path d="M6 15.500h8" stroke="#0f5ba0" /></Art>;
const SpotifyIcon = () => <Art><circle cx="10" cy="10" r="9.800" fill="#2fd565" /><g fill="none" stroke="#17261c" strokeLinecap="round"><path d="M4.200 6.800c4-1.200 8.500-.8 12 1.200" strokeWidth="1.900" /><path d="M4.800 10.200c3.400-1 7-.6 10 1.100" strokeWidth="1.600" /><path d="M5.400 13.300c2.800-.8 5.700-.4 8.200 1" strokeWidth="1.300" /></g></Art>;
const WhatsIcon = () => <Art><path d="M1 19 2.300 14.200A8.700 8.700 0 1 1 5.800 17.700z" fill="#1d2b24" stroke="#2fd366" strokeWidth="2" strokeLinejoin="round" /><path d="M7 5.500l1.600 2.700-1 1.400c.8 1.500 1.700 2.400 3.200 3.100l1.400-1 2.500 1.500c-.4 2-2.600 2.300-4.300 1.600-2.600-1-4.600-3-5.300-5.500-.4-1.600.4-3.300 1.900-3.800z" fill="#2fd366" /></Art>;
const ChromeIcon = () => <Art><circle cx="10" cy="10" r="9.800" fill="#fbc116" /><path d="M10 10 1.400 5.200A9.800 9.800 0 0 1 18.600 5.200H10z" fill="#e33b2e" /><path d="M10 10 1.500 5.100a9.800 9.800 0 0 0 7.800 14.700L14.200 12z" fill="#229a4d" /><path d="M18.600 5.300H10L14.200 12 9.300 19.800a9.800 9.800 0 0 0 9.300-14.500z" fill="#fbc116" /><circle cx="10" cy="10" r="4.700" fill="#fff" /><circle cx="10" cy="10" r="3.700" fill="#2f78e6" /></Art>;
const DiscordIcon = () => <Art><circle cx="10" cy="10" r="9.800" fill="#5965ee" /><path d="M5.500 6.500c1-.7 2-1 3-1.100l.5.800h2l.5-.8c1 .1 2 .4 3 1.100 1.200 2 1.800 4.500 1.500 7-1 .8-2 1.200-3 1.400l-.8-1.300H7.800L7 14.900c-1-.2-2-.6-3-1.400-.3-2.500.3-5 1.500-7z" fill="#fff" /><circle cx="7.800" cy="10.500" r="1.300" fill="#5965ee" /><circle cx="12.200" cy="10.500" r="1.300" fill="#5965ee" /></Art>;
const NitroIcon = () => <Art><rect width="20" height="20" rx="1" fill="#e8481f" /><path d="M4.500 17.500V6.500C4.500 4 6.500 2.500 11 2v7c0 4.500-2 7.500-6.500 8.500z" fill="#fff" /><path d="M15.500 2.500v11c0 2.500-2 4-6.500 4.500v-7c0-4.500 2-7.500 6.500-8.500z" fill="#fff" /><path d="M11.500 2.500c-.5 3-.3 4-.8 5-.8 1.500-1.200 2-1.500 4-.2 2 0 4-.7 6" stroke="#e8481f" strokeWidth="1" fill="none" /></Art>;
const SolidIcon = () => (
  <Art s={21}><path d="M1 4 6 0.500h13L20 3v13l-5 1H1z" fill="#b01c22" /><path d="M1 4 6 .5h13l-4 4z" fill="#e0504c" /><path d="M15 4.500 19 .5 20 3v13l-5 1z" fill="#7d1015" /><text x="1.500" y="13.500" fontSize="10.500" fontWeight="700" fill="#fff" fontFamily="Liberation Sans, sans-serif">S</text><text x="9.800" y="13.500" fontSize="9.500" fontWeight="700" fill="#fff" fontFamily="Liberation Sans, sans-serif">W</text><text x="7.500" y="19.500" fontSize="5.500" fontWeight="700" fill="#fff" fontFamily="Liberation Sans, sans-serif">2024</text></Art>
);

/* ---------- data ---------- */

const treeMarks = 'r-rd-r-----rd-rrrrrr'.split('');

type Line = { t?: string; i?: number; c?: string[] };
const report: Line[] = [
  { t: 'Mass properties of Part1' },
  { t: 'Configuration: Default', i: 14 },
  { t: 'Coordinate system: -- default --', i: 14 },
  {},
  { t: 'Density = 0.00 grams per cubic millimeter' },
  {},
  { t: 'Mass = 138.13 grams' },
  {},
  { t: 'Volume = 51159.57 cubic millimeters' },
  {},
  { t: 'Surface area = 86544.88  square millimeters' },
  {},
  { t: 'Center of mass: ( millimeters )' },
  { t: 'X = 1.09', i: 17 },
  { t: 'Y = 9.38', i: 17 },
  { t: 'Z = 0.00', i: 17 },
  {},
  { t: 'Principal axes of inertia and principal moments of inertia: ( grams *  square millimeters )' },
  { t: 'Taken at the center of mass.' },
  { c: ['Ix = ( 1.00,  0.00,  0.00)', 'Px = 258872.82'], i: 19.5 },
  { c: ['Iy = ( 0.00,  0.00, -1.00)', 'Py = 608368.48'], i: 19.5 },
  { c: ['Iz = ( 0.00,  1.00,  0.00)', 'Pz = 827051.28'], i: 19.5 },
  {},
  { t: 'Moments of inertia: ( grams *  square millimeters )' },
  { t: 'Taken at the center of mass and aligned with the output coordinate system. (Using positive tensor notation.)' },
  { c: ['Lxx = 258876.33', 'Lxy = -1412.70', 'Lxz = -5.05'], i: 17 },
  { c: ['Lyx = -1412.70', 'Lyy = 827047.77', 'Lyz = 0.00'], i: 17 },
  { c: ['Lzx = -5.05', 'Lzy = 0.00', 'Lzz = 608368.48'], i: 17 },
  {},
  { t: 'Moments of inertia: ( grams *  square millimeters )' },
  { t: 'Taken at the output coordinate system. (Using positive tensor notation.)' },
  { c: ['Ixx = 271021.23', 'Ixy = 0.00', 'Ixz = -5.05'], i: 17 },
  { c: ['Iyx = 0.00', 'Iyy = 827212.09', 'Iyz = 0.00'], i: 17 },
  { c: ['Izx = -5.05', 'Izy = 0.00', 'Izz = 620677.70'], i: 17 },
];

const tasks: { icon: React.ReactNode; run: 'none' | 'dot' | 'active'; badge?: [string, string, string] }[] = [
  { icon: <TaskViewIcon />, run: 'none' },
  { icon: <EdgeIcon />, run: 'none' },
  { icon: <CopilotIcon />, run: 'none' },
  { icon: <ExplorerIcon />, run: 'dot' },
  { icon: <SpotifyIcon />, run: 'dot' },
  { icon: <WhatsIcon />, run: 'none', badge: ['5', '#5dc0f2', '#10222c'] },
  { icon: <ChromeIcon />, run: 'none' },
  { icon: <DiscordIcon />, run: 'dot', badge: ['9+', '#e2545a', '#fff'] },
  { icon: <NitroIcon />, run: 'dot' },
  { icon: <SolidIcon />, run: 'active' },
];

/* ---------- sections ---------- */

const MainTitle = () => (
  <TitleBar>
    <TitleStart>
      <Icon s={16}><path d="M3 2h4c4 0 4 3 0 6L1 14M1 8l4-2M14 3c-4 0-6 2-3.500 4s2 5-2 6" stroke="#c8252f" strokeWidth="1.500" /></Icon>
      <ListIcon />
    </TitleStart>
    <TitleGear><GearIcon /><Down c="#222" /></TitleGear>
    <DocTitle>Part1 *</DocTitle>
    <SearchBox>
      <svg width="13" height="13" viewBox="0 0 13 13"><rect width="13" height="13" fill="#26282c" /><path d="M3 3l3 3-3 3M7 9.500h4" stroke="#fff" strokeWidth="1.300" fill="none" /></svg>
      <SearchLabel>Search Commands</SearchLabel>
      <Magnifier />
      <svg width="9" height="5" viewBox="0 0 9 5"><path d="M3.500 0.500h5L6 4z" fill="#444" /></svg>
    </SearchBox>
    <TitleButtons>
      <Icon s={13}><circle cx="8" cy="8" r="7" stroke="#3f3f3f" strokeWidth="1.200" /><circle cx="8" cy="6.500" r="2.600" stroke="#3f3f3f" /><path d="M3.500 13c1-3.500 8-3.500 9 0" stroke="#3f3f3f" /></Icon>
      <Icon s={13}><circle cx="8" cy="8" r="7" stroke="#3f3f3f" strokeWidth="1.200" /><path d="M6 6.300c0-2.600 4.200-2.600 4.200 0 0 1.700-2.200 1.700-2.200 3.300M8 12v.2" stroke="#222" strokeWidth="1.500" /></Icon>
      <Icon s={12}><path d="M4 12h8" stroke="#222" strokeWidth="1.500" strokeLinecap="butt" /></Icon>
      <Icon s={12}><rect x="1.500" y="2.500" width="13" height="11" stroke="#222" /><path d="M1.500 3.300h13" stroke="#222" strokeWidth="2" /></Icon>
      <Icon s={12}><path d="M3.500 3.500l9 9M12.500 3.500l-9 9" stroke="#222" strokeWidth="1.300" /></Icon>
    </TitleButtons>
  </TitleBar>
);

const RibbonBar = () => (
  <Ribbon>
    <RibbonEdge><RibbonTail>D</RibbonTail><RibbonTail $end>ce<br />n</RibbonTail></RibbonEdge>
    <RibbonColumn $pad={6}>
      <RibbonItem><CheckIcon />Check</RibbonItem>
      <RibbonItem><GeometryIcon />Geometry Analysis</RibbonItem>
      <RibbonItem $off><ImportIcon />Import Diagnostics</RibbonItem>
    </RibbonColumn>
    <RibbonColumn $line $pad={6}>
      <RibbonItem $off><CompareBodyIcon />Body Compare</RibbonItem>
    </RibbonColumn>
    <RibbonColumn>
      <RibbonItem><DeviationIcon />Deviation Analysis</RibbonItem>
      <RibbonItem><ZebraIcon /><span>Zebra Stripes</span></RibbonItem>
      <RibbonItem><CurvatureIcon /><span>Curvature</span></RibbonItem>
    </RibbonColumn>
    <RibbonColumn>
      <RibbonItem><DraftIcon />Draft Analysis</RibbonItem>
      <RibbonItem><UndercutIcon />Undercut Analysis</RibbonItem>
      <RibbonItem><PartingIcon />Parting Line Analysis</RibbonItem>
    </RibbonColumn>
    <RibbonColumn>
      <RibbonItem><SymmetryIcon />Symmetry Check</RibbonItem>
      <RibbonItem><ThicknessIcon />Thickness Analysis</RibbonItem>
      <RibbonItem><CompareDocIcon />Compare Documents</RibbonItem>
    </RibbonColumn>
    <BigItem $line><ActiveDocIcon /><WideLabel>Check Active Document</WideLabel><BigArrow><Down c="#333" /></BigArrow></BigItem>
    <BigItem $off><ThreeDxIcon />3DEXPERIENCE<br />Simulation Connector</BigItem>
    <BigItem><SimIcon />SimulationXpress<br />Analysis Wizard</BigItem>
    <BigItem><FloIcon />FloXpress<br />Analysis Wizard</BigItem>
    <RibbonEnd>
      <svg width="7" height="7" viewBox="0 0 7 7"><path d="M0.500 1 3 3.500.5 6M3.500 1 6 3.500 3.500 6" stroke="#333" fill="none" /></svg>
      <svg width="8" height="6" viewBox="0 0 8 6"><path d="M1 5 4 1.800 7 5" stroke="#222" strokeWidth="1.300" fill="none" /></svg>
    </RibbonEnd>
  </Ribbon>
);

const WorkArea = () => (
  <Workspace>
    <TreePanel>
      <LeftTab>Fe</LeftTab>
      <TreeCell $bg="#f3f3f3" />
      <TreeCell $bg="#ececec"><svg width="4" height="11" viewBox="0 0 4 11"><path d="M4 1 1 4v4l3 2z" fill="#e2b437" stroke="#856514" strokeWidth="0.700" /></svg></TreeCell>
      <TreeCell $bg="#e9eff5"><svg width="9" height="14" viewBox="0 0 9 14"><path d="M0.500 1.500H9M0.500 1.500 6 7v6l3-1" stroke="#39637d" fill="#bcd6e4" /></svg></TreeCell>
      <TreeCell><YellowPart s={11} /></TreeCell>
      <TreeRows>
        {treeMarks.map((m, i) => <span key={i}>{m === 'r' ? <Right /> : m === 'd' ? <Down /> : null}</span>)}
      </TreeRows>
      <TreeCell $bg="#e4e7ec" />
      <TreeCell $bg="#aeb3c2" />
    </TreePanel>
    <Viewport>
      <Model />
      <TabRow>
        <Tabs>
          <Tab $w={452} $first>SOLIDWORKS Add-Ins</Tab>
          <Tab $w={36}>MBD</Tab>
          <Tab $w={105}>SOLIDWORKS CAM</Tab>
          <Tab $w={126}>SOLIDWORKS CAM TBM</Tab>
          <Tab $w={126}>SOLIDWORKS Inspection</Tab>
        </Tabs>
        <DocButtons>
          <Icon s={10}><rect x="1.500" y="1.500" width="13" height="13" stroke={docStroke} strokeWidth="1.500" /><path d="M5 2v12" stroke={docStroke} strokeWidth="1.500" /><path d="M12 5v6L8.500 8z" fill="#555" stroke="none" /></Icon>
          <Icon s={10}><rect x="1.500" y="1.500" width="13" height="13" stroke={docStroke} strokeWidth="1.500" /><path d="M11 2v12" stroke={docStroke} strokeWidth="1.500" /><path d="M5 5v6l3.500-3z" fill="#555" stroke="none" /></Icon>
          <Icon s={10}><path d="M3 13.500h11" stroke={docStroke} strokeWidth="1.800" strokeLinecap="butt" /></Icon>
          <Icon s={10}><path d="M5 5V1.500h10V9h-4M1 6.500h10V14H1z" stroke={docStroke} strokeWidth="1.500" /></Icon>
          <Icon s={10}><path d="M3 3l10 10M13 3 3 13" stroke={docStroke} strokeWidth="1.500" /></Icon>
        </DocButtons>
      </TabRow>
      <HeadsUp>
        <ZoomFit /><ZoomArea /><PrevView /><SectionView /><DynamicView />
        <OrientIcon /><Down c="#8b8b8b" s={4} />
        <StyleIcon /><Down c="#8b8b8b" s={4} />
        <EyeIcon /><Down c="#8b8b8b" s={4} />
        <AppearIcon /><SceneIcon /><Down c="#8b8b8b" s={4} />
        <MonitorIcon /><Down c="#8b8b8b" s={4} />
      </HeadsUp>
      <TaskPane>
        <PaneButton $active><HomeIcon /></PaneButton>
        <PaneButton><LibraryIcon /></PaneButton>
        <PaneButton><FolderIcon /></PaneButton>
        <PaneButton><PaletteIcon /></PaneButton>
        <PaneButton><Icon s={14}><Ball /></Icon></PaneButton>
        <PaneButton><PropsIcon /></PaneButton>
      </TaskPane>
    </Viewport>
  </Workspace>
);

const SheetTools = () => (
  <SheetBar>
    <SheetCell $w={18}><SheetIcon n={5} /></SheetCell>
    {[0, 1, 2, 3, 4, 5].map((n) => <SheetCell key={n} $w={18}><SheetIcon n={n} /></SheetCell>)}
    <SheetCell $w={14}><Down c="#222" /></SheetCell>
    <SheetCell $w={16}><SheetIcon n={6} /></SheetCell>
    <SheetCell $w={6}><SheetLine $h={14} /></SheetCell>
    {[7, 8, 9].map((n) => <SheetCell key={n} $w={17.6}><SheetIcon n={n} /></SheetCell>)}
    <SheetCell $w={6}><SheetLine $h={14} /></SheetCell>
    {[10, 11, 12].map((n) => <SheetCell key={n} $w={17.8}><SheetIcon n={n} /></SheetCell>)}
    <SheetCell $w={18} $off><SheetIcon n={13} /></SheetCell>
    <SheetCell $w={6}><SheetLine $h={14} /></SheetCell>
    <SheetCell $w={18} $off><SheetIcon n={14} /></SheetCell>
    <SheetCell $w={18}><SheetIcon n={15} /></SheetCell>
    <SheetCell $w={5}><SheetLine $h={14} /></SheetCell>
    <SheetCell $w={12}><SheetLine $h={20} /></SheetCell>
  </SheetBar>
);

const MassDialog = () => (
  <Dialog>
    <DialogTitle>
      <ScalesIcon />
      <DialogName>Mass Properties</DialogName>
      <DialogButtons>
        <Icon s={9}><path d="M1 8h14" stroke="#777" strokeWidth="1.600" /></Icon>
        <Icon s={9}><rect x="1.500" y="1.500" width="13" height="13" stroke="#c3c5ca" strokeWidth="1.600" /></Icon>
        <Icon s={9}><path d="M1 1l14 14M15 1 1 15" stroke="#222" strokeWidth="1.700" /></Icon>
      </DialogButtons>
    </DialogTitle>
    <SelectArea>
      <PartMark><YellowPart s={13} /></PartMark>
      <ListBox><ListItem>Part1</ListItem></ListBox>
      <OptionsSlot><PushButton $w={58}><u>O</u>ptions...</PushButton></OptionsSlot>
    </SelectArea>
    <ButtonRow>
      <PushButton $w={149}>Override Mass Properties...</PushButton>
      <PushButton $w={70}><u>R</u>ecalculate</PushButton>
    </ButtonRow>
    <CheckLines>
      <CheckLine>
        <CheckBox $on><svg width="7" height="6" viewBox="0 0 7 6"><path d="M1 3l1.800 1.800L6 1.300" stroke="#fff" fill="none" /></svg></CheckBox>
        <span>Include <u>h</u>idden bodies/components</span>
      </CheckLine>
      <CheckLine><CheckBox />Create Center of Mass feature</CheckLine>
      <CheckLine><CheckBox />Show weld bead mass</CheckLine>
    </CheckLines>
    <CoordinateRow>
      Report coordinate values relative to:
      <SelectBox>-- default --<svg width="7" height="5" viewBox="0 0 7 5"><path d="M0.500 1 3.500 4 6.500 1" stroke="#666" fill="none" /></svg></SelectBox>
    </CoordinateRow>
    <Report>
      <ReportText>
        {report.map((l, i) =>
          l.c ? (
            <ReportColumns key={i} $indent={l.i ?? 0}>{l.c.map((x) => <span key={x}>{x}</span>)}</ReportColumns>
          ) : (
            <ReportLine key={i} $indent={l.i ?? 0}>{l.t}</ReportLine>
          ),
        )}
      </ReportText>
      <ReportScroll><ScrollThumb /></ReportScroll>
    </Report>
    <FooterRow>
      <PushButton $w={69}>Help</PushButton>
      <PushButton $w={72}><u>P</u>rint...</PushButton>
      <PushButton $w={95}><u>C</u>opy to Clipboard</PushButton>
    </FooterRow>
  </Dialog>
);

const BottomBar = () => (
  <Taskbar>
    <Weather>
      <WeatherArt><WeatherIcon /><Badge $bg="#f58a94" $fg="#3a1418" $top={-1} $right={1}>1</Badge></WeatherArt>
      <div>26°C<Muted>Berawan</Muted></div>
    </Weather>
    <WinLogo />
    <SearchPill><Magnifier c="#e4e4e4" s={13} />Search<FoodIcon /></SearchPill>
    <AppIcons>
      {tasks.map((t, i) => (
        <TaskSlot key={i} $active={t.run === 'active'}>
          {t.icon}
          <Running $kind={t.run} />
          {t.badge && <Badge $bg={t.badge[1]} $fg={t.badge[2]}>{t.badge[0]}</Badge>}
        </TaskSlot>
      ))}
    </AppIcons>
    <Tray>
      <Icon s={11}><path d="M2 11l6-6 6 6" stroke="#eee" strokeWidth="1.700" /></Icon>
      <Icon s={14}><path d="M1 6.500c4-4.500 10-4.500 14 0M3.300 9c2.700-3 6.700-3 9.400 0M5.700 11.300c1.400-1.500 3.200-1.500 4.600 0" stroke="#eee" strokeWidth="1.300" /><circle cx="8" cy="13.300" r="1.200" fill="#eee" stroke="none" /></Icon>
      <Icon s={14}><path d="M1 6h2.500L7 2.500v11L3.500 10H1z" stroke="#eee" strokeWidth="1.200" /><path d="M9.500 6c1 1.200 1 2.800 0 4M11.500 4c2 2.300 2 5.700 0 8M13.500 2.500c3 3.300 3 7.700 0 11" stroke="#eee" /></Icon>
      <Icon s={14}><rect x="1" y="3.500" width="12" height="9" rx="2" stroke="#eee" strokeWidth="1.300" /><rect x="2.800" y="5.300" width="6" height="5.400" fill="#eee" stroke="none" /><path d="M15 7v2" stroke="#eee" strokeWidth="1.500" /></Icon>
      <Clock>23:11<br />06/05/2025</Clock>
    </Tray>
  </Taskbar>
);

export default function App() {
  return (
    <Desktop>
      <GlobalStyle />
      <Screen>
        <AppColumn>
          <AppWindow>
            <TopEdge />
            <MainTitle />
            <MenuRow>
              <MenuTab>
                <svg width="3" height="20" viewBox="0 0 3 20"><path d="M1.500 1v18" stroke="#888" strokeDasharray="1 1.500" /></svg>
                <CompassIcon />
              </MenuTab>
            </MenuRow>
            <RibbonBar />
            <WorkArea />
            <SheetTools />
            <StatusBar>
              <span>SOLIDWORKS Premium 2024 SP1.0</span>
              <span>Editing Part</span>
              <span>MMGS</span>
              <svg width="5" height="4" viewBox="0 0 6 6"><path d="M0.500 5h5L3 1z" fill="#444" /></svg>
              <Icon s={12} w={34} vb="0 0 45 16"><path d="M7 6 13 2l7 3v5l-6 5-6-4zM7 6l7 4 6-5M14 10v5M10 4l7 4M10 8v5" stroke="#444" strokeWidth="1.200" /><path d="M37 14h1M40 14h1M43 14h1M40 11h1M43 11h1M43 8h1" stroke="#999" strokeWidth="1.500" /></Icon>
            </StatusBar>
          </AppWindow>
          <Behind>
            <svg width="1269" height="5" viewBox="0 0 1269 5"><g fill="#4a4c4e"><path d="M550 1h2v2h-2zM566 1h2v2h-2zM580 1h2v2h-2zM655 1h2v2h-2zM673 1h2v2h-2zM684 1h2v3h-2z" /><ellipse cx="699" cy="0" rx="5" ry="3" /><path d="M1006 0h11v2h-11zM1046 0h10v1.500h-10zM1066 0h10v1.500h-10zM1087 0h9v1.500h-9zM1107 0h9v1.500h-9z" /></g><ellipse cx="719" cy="0" rx="5" ry="3" fill="#86898a" /><path d="M1022 0h20v4h-20z" fill="#8c8e8f" /></svg>
          </Behind>
        </AppColumn>
        <BackStrip>
          <StripPart $h={43} $bg="#3a3a3c" />
          <StripPart $h={78} $bg="#d9d9db" />
          <StripPart $h={31} $bg="#ececee" $line><Down s={8} /></StripPart>
          <StripPart $h={14} $bg="#f6f6f6" $line><Up /></StripPart>
          <StripPart $h={350} $bg="#dedede" />
          <StripPart $h={52} $bg="#f4f4f4" $line />
          <StripPart $h={78} $bg="#dcdcdc" />
          <StripPart $h={14} $bg="#eeeeee" $line><Down s={8} /></StripPart>
          <StripPart $h={19} $bg="#dfdfe1" />
        </BackStrip>
      </Screen>
      <MassDialog />
      <BottomBar />
    </Desktop>
  );
}
